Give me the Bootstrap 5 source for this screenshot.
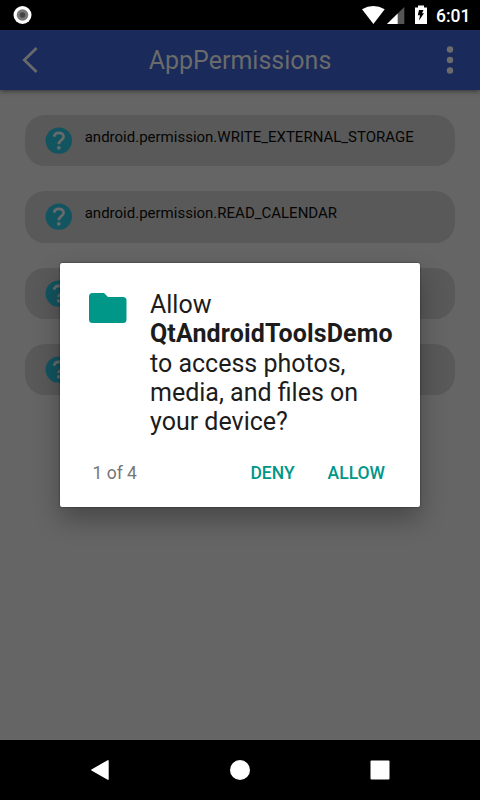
<!DOCTYPE html>
<html lang="en">
<head>
<meta charset="utf-8">
<meta name="viewport" content="width=device-width, initial-scale=1">
<title>AppPermissions</title>
<link href="https://cdn.jsdelivr.net/npm/bootstrap@5.3.0/dist/css/bootstrap.min.css" rel="stylesheet">
<style>
  body { font-family: Roboto, "Liberation Sans", sans-serif; background: #000; }
  svg { display: block; flex: none; }
  .screen { width: 480px; height: 800px; background: #656565; }
  .status-bar { height: 30px; background: #000; padding: 0 10.5px 0 13px; }
  .clock { font-size: 17.5px; line-height: 30px; font-weight: 500; margin-left: 8px; padding-top: 2px; width: 33.5px; white-space: nowrap; }
  .app-bar { height: 60px; background: #1a2a5a; padding: 0 20px 0 17px; box-shadow: 0 1px 5px rgba(0,0,0,.5); z-index: 1; }
  .app-title { font-size: 25px; line-height: 60px; color: #6a6b6a; padding-top: 2px; padding-right: 3px; }
  .permissions { padding: 25px; gap: 25px; }
  .permission { height: 51.3px; border-radius: 20px; background: #595959; padding-left: 20px; gap: 11.7px; color: #050505; font-size: 15px; line-height: 18px; }
  .permission svg { margin-top: 12px; }
  .permission span { margin-top: 13px; }
  .nav-keys { height: 60px; background: #000; padding: 0 90px; }
  .dialog-layer { top: 263px; left: 60px; z-index: 2; }
  .dialog-box { width: 360px; height: 244px; background: #fff; border-radius: 2px; box-shadow: 0 0 2px rgba(0,0,0,.6), 0 12px 26px rgba(0,0,0,.3); }
  .dialog-main { padding: 27px 20px 0 28.7px; gap: 23.3px; }
  .dialog-main svg { margin-top: 3px; }
  .dialog-text { font-size: 25px; line-height: 29.3px; color: #1c1c1c; white-space: nowrap; }
  .dialog-text b { letter-spacing: .13px; }
  .dialog-actions { padding: 0 35px 0 32.5px; margin-top: 27px; font-size: 17.5px; line-height: 21px; }
  .step { color: #757575; }
  .action { color: #009688; font-size: 17.5px; line-height: 21px; font-weight: 500; background: none; border: 0; padding: 0; }
  .action + .action { margin-left: 33px; }
</style>
</head>
<body>
<div class="screen d-flex flex-column position-relative overflow-hidden">
  <div class="status-bar d-flex align-items-center text-white">
    <svg width="20" height="30" viewBox="0 0 20 30"><circle cx="9.500" cy="15" r="9" fill="#fff"/><circle cx="9.500" cy="15" r="5.800" fill="#777"/><circle cx="9.500" cy="15" r="2.800" fill="#444"/></svg>
    <svg class="ms-auto" width="66" height="30" viewBox="362 0 66 30">
      <path d="M362 9.200Q373.300 2.800 384.700 9.200L373.400 24Z" fill="#fff"/>
      <path d="M404.300 7V24H387Z" fill="#555"/><path d="M397.700 13.500V24H387Z" fill="#fff"/>
      <path d="M418 5.500h6v2h3V24h-12V7.500h3z" fill="#fff"/><path d="M419 10h4.500l-1.500 3.300h2l-5 7.200 1-5.200h-2.200z" fill="#000"/>
    </svg>
    <span class="clock">6:01</span>
  </div>
  <header class="app-bar d-flex align-items-center justify-content-between">
    <svg width="26" height="30" viewBox="17 45 26 30" fill="none" stroke="#686969" stroke-width="2.800"><path d="M36.600 48L24.300 60l12.300 12"/></svg>
    <span class="app-title">AppPermissions</span>
    <svg width="20" height="30" viewBox="440 45 20 30" fill="#6b6b6c"><circle cx="450" cy="49.500" r="3.200"/><circle cx="450" cy="60" r="3.200"/><circle cx="450" cy="70.500" r="3.200"/></svg>
  </header>
  <main class="permissions d-flex flex-column flex-grow-1">
    <div class="permission d-flex align-items-start"><svg width="28" height="28" viewBox="0 0 28 28"><use href="#help"/></svg><span>android.permission.WRITE_EXTERNAL_STORAGE</span></div>
    <div class="permission d-flex align-items-start"><svg width="28" height="28" viewBox="0 0 28 28"><use href="#help"/></svg><span>android.permission.READ_CALENDAR</span></div>
    <div class="permission d-flex align-items-start"><svg width="28" height="28" viewBox="0 0 28 28"><use href="#help"/></svg></div>
    <div class="permission d-flex align-items-start"><svg width="28" height="28" viewBox="0 0 28 28"><use href="#help"/></svg></div>
  </main>
  <nav class="nav-keys d-flex align-items-center justify-content-between">
    <svg width="20" height="20" viewBox="0 0 20 20"><path d="M1.800 10L18 .800V19.200Z" fill="#fff" stroke="#fff" stroke-width="1.400" stroke-linejoin="round"/></svg>
    <svg width="20" height="20" viewBox="0 0 20 20"><circle cx="10" cy="10" r="10" fill="#fff"/></svg>
    <svg width="20" height="20" viewBox="0 0 20 20"><rect x=".5" y=".5" width="19" height="19" rx="1" fill="#fff"/></svg>
  </nav>
  <div class="dialog-layer position-absolute">
    <div class="dialog-box" role="dialog">
      <div class="dialog-main d-flex align-items-start">
        <svg width="38" height="30" viewBox="0 0 38 30"><path d="M3.500 0H15l4 4h15.500A3.500 3.500 0 0 1 37.500 7.500v19A3.500 3.500 0 0 1 34 30H3.500A3.500 3.500 0 0 1 0 26.500v-23A3.500 3.500 0 0 1 3.500 0z" fill="#009688"/></svg>
        <div class="dialog-text">Allow<br><b>QtAndroidToolsDemo</b><br>to access photos,<br>media, and files on<br>your device?</div>
      </div>
      <div class="dialog-actions d-flex align-items-center">
        <span class="step me-auto">1 of 4</span>
        <button type="button" class="action">DENY</button>
        <button type="button" class="action">ALLOW</button>
      </div>
    </div>
  </div>
</div>
<svg width="0" height="0" class="position-absolute"><defs><g id="help"><circle cx="13.800" cy="13.600" r="13.200" fill="#125460"/><path d="M9.100 9.700C9.500 7 11.300 5.800 13.800 5.800C16.600 5.800 18.600 7.400 18.600 9.700C18.600 13 13.800 13.300 13.800 17.200" fill="none" stroke="#686b6b" stroke-width="2.700"/><circle cx="13.800" cy="20.800" r="1.900" fill="#686b6b"/></g></defs></svg>
<script src="https://cdn.jsdelivr.net/npm/bootstrap@5.3.0/dist/js/bootstrap.bundle.min.js"></script>
</body>
</html>
